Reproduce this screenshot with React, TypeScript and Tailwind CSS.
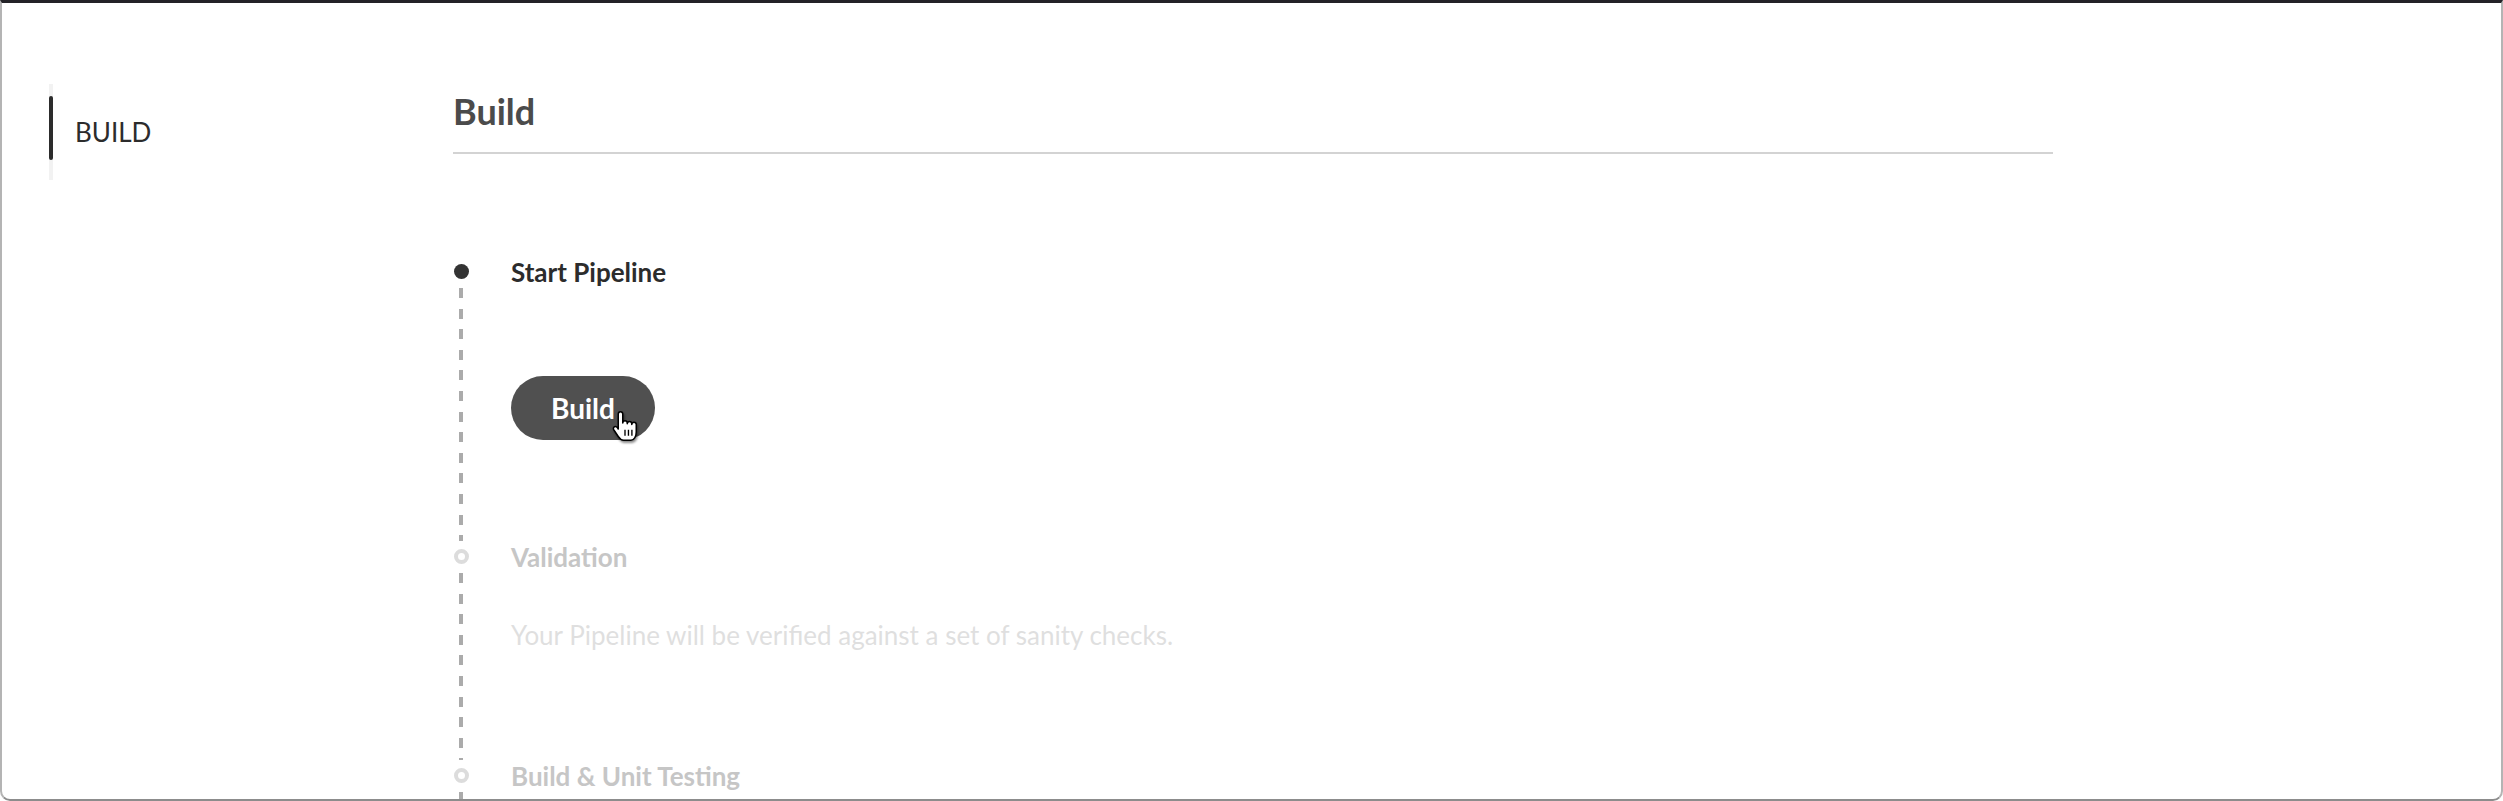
import React from 'react';

type Step = {
  title: string;
  description?: string;
  active?: boolean;
  action?: string;
};

const steps: Step[] = [
  { title: 'Start Pipeline', active: true, action: 'Build' },
  { title: 'Validation', description: 'Your Pipeline will be verified against a set of sanity checks.' },
  { title: 'Build & Unit Testing' },
];

function HandCursor() {
  return (
    <svg
      className="absolute left-[99px] top-[33px] w-[30px] h-[34px] drop-shadow-[1px_2px_1px_rgba(0,0,0,0.45)]"
      viewBox="0 0 20 22"
    >
      <path
        d="M7 1.5C7.8 1.5 8.5 2.2 8.5 3V9C8.5 8.2 9.2 7.5 10 7.5S11.5 8.2 11.5 9V9.5C11.5 8.7 12.2 8 13 8S14.5 8.7 14.5 9.5V10C14.5 9.2 15.2 8.5 16 8.5S17.5 9.2 17.5 10V15C17.5 18 16 20.5 14 20.5H9C7.5 20.5 6.5 19.5 5.5 18L2.5 13.5C2 12.7 2.3 11.8 3 11.5C3.7 11.2 4.5 11.5 5 12.2L5.5 13V3C5.5 2.2 6.2 1.5 7 1.5Z"
        fill="#fff"
        stroke="#000"
        strokeWidth="1"
        strokeLinejoin="round"
      />
      <path d="M10 13.5V17.5M12.3 13.5V17.5M14.6 13.5V17.5" stroke="#000" strokeWidth="0.9" />
    </svg>
  );
}

function TimelineStep({ step, last }: { step: Step; last: boolean }) {
  return (
    <div className="flex gap-[42px]">
      {/* marker + dashed connector */}
      <div className="w-[16px] flex flex-col items-center flex-shrink-0">
        <div className="h-[30px] flex items-center">
          {step.active ? (
            <div className="w-[15px] h-[15px] rounded-full bg-[#333333]" />
          ) : (
            <div className="w-[15px] h-[15px] rounded-full border-[4px] border-[#dcdcdc] bg-white" />
          )}
        </div>
        <div className="w-[4px] flex-1 mt-[2px] bg-[repeating-linear-gradient(to_bottom,#ababab_0px,#ababab_10px,transparent_10px,transparent_20.6px)]" />
      </div>

      <div className={`flex flex-col ${last ? 'pb-[60px]' : step.description ? 'pb-[109px]' : 'pb-[101px]'}`}>
        <div
          className={`text-[26px] leading-[32px] font-bold ${
            step.active ? 'text-[#2c2c2c]' : 'text-[#c6c6c6]'
          }`}
        >
          {step.title}
        </div>
        {step.description && (
          <p className="mt-[46px] text-[26px] leading-[32px] text-[#dfdfdf]">{step.description}</p>
        )}
        {step.action && (
          <div className="mt-[88px]">
            <button className="relative h-[64px] px-[40px] rounded-full bg-[#505050] text-white text-[28px] font-bold leading-none">
              {step.action}
              <HandCursor />
            </button>
          </div>
        )}
      </div>
    </div>
  );
}

export default function App() {
  return (
    <div className="w-full h-[801px] overflow-hidden bg-white font-['Lato',sans-serif] border-t-[3px] border-t-[#232227] border-x-2 border-x-[#b4b4b4] border-b-2 border-b-[#8c8c8c] rounded-b-[10px] flex">
      {/* side nav */}
      <div className="w-[451px] flex-shrink-0 pl-[47px] pt-[81px]">
        <div className="flex items-center gap-[22px]">
          <div className="w-[4px] h-[96px] bg-[#f2f2f2] pt-[12px]">
            <div className="w-[4px] h-[64px] rounded-full bg-[#2c2c2c]" />
          </div>
          <span className="text-[26px] leading-[32px] text-[#2c2c2c]">BUILD</span>
        </div>
      </div>

      {/* main */}
      <div className="w-[1600px] pt-[86px]">
        <h1 className="text-[36px] leading-[44px] font-bold text-[#4b4b4b] pb-[19px] border-b-2 border-[#d3d3d3]">
          Build
        </h1>
        <div className="mt-[102px]">
          {steps.map((s, i) => (
            <TimelineStep key={s.title} step={s} last={i === steps.length - 1} />
          ))}
        </div>
      </div>
    </div>
  );
}
